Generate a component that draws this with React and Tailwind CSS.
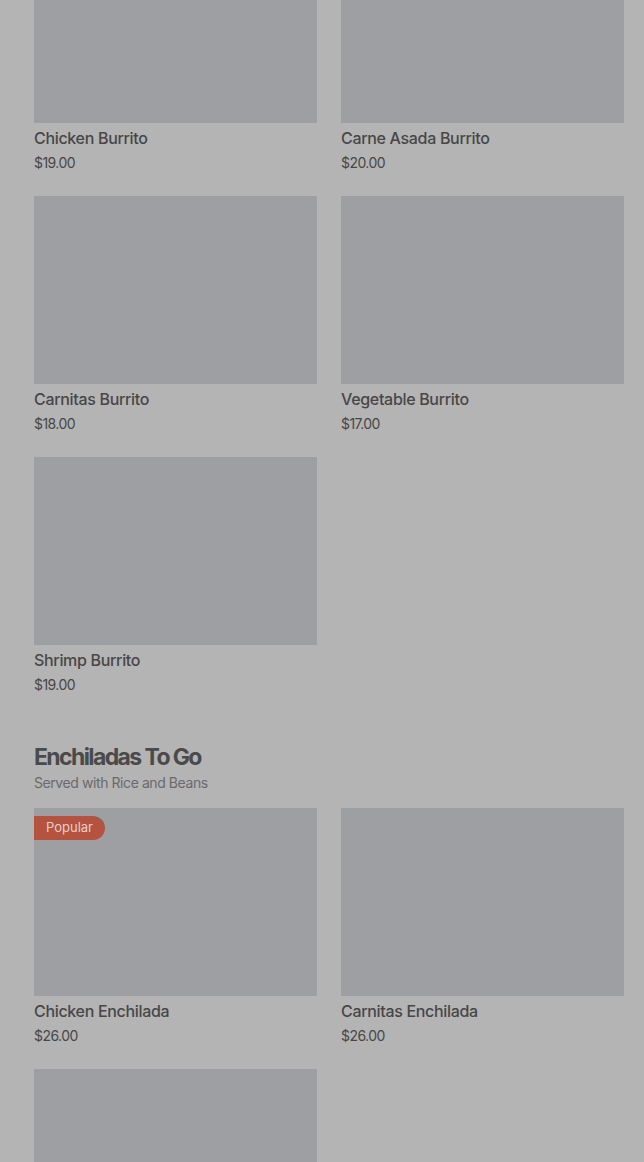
import React from 'react';

const sections = [
  {
    title: null,
    items: [
      { name: 'Chicken Burrito', price: '$19.00' },
      { name: 'Carne Asada Burrito', price: '$20.00' },
      { name: 'Carnitas Burrito', price: '$18.00' },
      { name: 'Vegetable Burrito', price: '$17.00' },
      { name: 'Shrimp Burrito', price: '$19.00' },
    ],
  },
  {
    title: 'Enchiladas To Go',
    subtitle: 'Served with Rice and Beans',
    items: [
      { name: 'Chicken Enchilada', price: '$26.00', popular: true },
      { name: 'Carnitas Enchilada', price: '$26.00' },
      { name: null, price: null },
    ],
  },
];

function Item({ item }) {
  return (
    <div>
      <div className="relative h-[188px] bg-[#9d9fa3]">
        {item.popular && (
          <span className="absolute left-0 top-2 h-6 px-3 flex items-center rounded-r-full bg-[#b4533f] text-[13px] text-[#e6cfc9]">
            Popular
          </span>
        )}
      </div>
      {item.name && (
        <>
          <div className="mt-[5px] text-[16px] leading-5 font-medium tracking-[-0.02em] text-[#474747]">{item.name}</div>
          <div className="mt-[5px] text-[14px] leading-5 tracking-[-0.04em] text-[#474747]">{item.price}</div>
        </>
      )}
    </div>
  );
}

export default function App() {
  return (
    <div className="h-[1162px] overflow-hidden bg-[#b4b4b4] pl-[34px] pr-5" style={{ fontFamily: 'Inter, "Noto Sans", sans-serif' }}>
      <div className="-mt-[65px]">
        {sections.map((s, i) => (
          <div key={i} className={i > 0 ? 'mt-[46px]' : ''}>
            {s.title && (
              <div className="mb-[15px]">
                <h2 className="text-[23px] leading-8 font-bold tracking-[-0.07em] text-[#4a4a4a]">{s.title}</h2>
                <p className="text-[14px] leading-5 tracking-[-0.03em] text-[#6a6a6a]">{s.subtitle}</p>
              </div>
            )}
            <div className="grid grid-cols-2 gap-x-6 gap-y-[23px]">
              {s.items.map((item, j) => (
                <Item key={j} item={item} />
              ))}
            </div>
          </div>
        ))}
      </div>
    </div>
  );
}
